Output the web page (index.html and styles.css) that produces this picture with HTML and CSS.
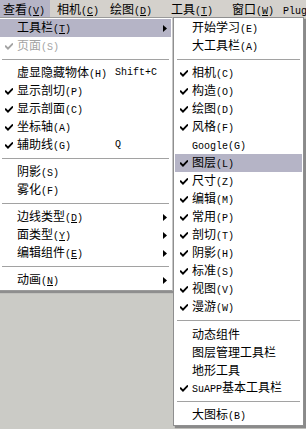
FILE: index.html
```html
<!DOCTYPE html>
<html>
<head>
<meta charset="utf-8">
<link rel="stylesheet" href="styles.css">
</head>
<body>
<div class="menubar">
  <span class="mi mi-on w1">查看<span class="k">(<u>V</u>)</span></span>
  <span class="mi w2">相机<span class="k">(<u>C</u>)</span></span>
  <span class="mi w3">绘图<span class="k">(<u>D</u>)</span></span>
  <span class="mi w4">工具<span class="k">(<u>T</u>)</span></span>
  <span class="mi w5">窗口<span class="k">(<u>W</u>)</span></span>
  <span class="mi"><span class="k">Plugins</span></span>
</div>

<div class="menu main">
  <div class="row hl"><span class="chk"></span><span class="lbl">工具栏<span class="k">(<u>T</u>)</span></span><span class="sc"></span><span class="arr"><svg width="4" height="7" viewBox="0 0 4 7"><polygon points="0,0 4,3.5 0,7"/></svg></span></div>
  <div class="row dis"><span class="chk"><svg class="ck" width="8" height="7" viewBox="0 0 8 7"><path d="M0.8 3.4 L3 5.6 L7.3 1.2"/></svg></span><span class="lbl">页面<span class="k">(S)</span></span></div>
  <div class="sep"></div>
  <div class="row"><span class="chk"></span><span class="lbl">虚显隐藏物体<span class="k">(H)</span></span><span class="sc k">Shift+C</span></div>
  <div class="row"><span class="chk"><svg class="ck" width="8" height="7" viewBox="0 0 8 7"><path d="M0.8 3.4 L3 5.6 L7.3 1.2"/></svg></span><span class="lbl">显示剖切<span class="k">(P)</span></span></div>
  <div class="row"><span class="chk"><svg class="ck" width="8" height="7" viewBox="0 0 8 7"><path d="M0.8 3.4 L3 5.6 L7.3 1.2"/></svg></span><span class="lbl">显示剖面<span class="k">(C)</span></span></div>
  <div class="row"><span class="chk"><svg class="ck" width="8" height="7" viewBox="0 0 8 7"><path d="M0.8 3.4 L3 5.6 L7.3 1.2"/></svg></span><span class="lbl">坐标轴<span class="k">(A)</span></span></div>
  <div class="row"><span class="chk"><svg class="ck" width="8" height="7" viewBox="0 0 8 7"><path d="M0.8 3.4 L3 5.6 L7.3 1.2"/></svg></span><span class="lbl">辅助线<span class="k">(G)</span></span><span class="sc k">Q</span></div>
  <div class="sep"></div>
  <div class="row"><span class="chk"></span><span class="lbl">阴影<span class="k">(S)</span></span></div>
  <div class="row"><span class="chk"></span><span class="lbl">雾化<span class="k">(F)</span></span></div>
  <div class="sep"></div>
  <div class="row"><span class="chk"></span><span class="lbl">边线类型<span class="k">(<u>D</u>)</span></span><span class="sc"></span><span class="arr"><svg width="4" height="7" viewBox="0 0 4 7"><polygon points="0,0 4,3.5 0,7"/></svg></span></div>
  <div class="row"><span class="chk"></span><span class="lbl">面类型<span class="k">(<u>Y</u>)</span></span><span class="sc"></span><span class="arr"><svg width="4" height="7" viewBox="0 0 4 7"><polygon points="0,0 4,3.5 0,7"/></svg></span></div>
  <div class="row"><span class="chk"></span><span class="lbl">编辑组件<span class="k">(<u>E</u>)</span></span><span class="sc"></span><span class="arr"><svg width="4" height="7" viewBox="0 0 4 7"><polygon points="0,0 4,3.5 0,7"/></svg></span></div>
  <div class="sep"></div>
  <div class="row"><span class="chk"></span><span class="lbl">动画<span class="k">(<u>N</u>)</span></span><span class="sc"></span><span class="arr"><svg width="4" height="7" viewBox="0 0 4 7"><polygon points="0,0 4,3.5 0,7"/></svg></span></div>
</div>

<div class="menu sub">
  <div class="row"><span class="chk"></span><span class="lbl">开始学习<span class="k">(E)</span></span></div>
  <div class="row"><span class="chk"></span><span class="lbl">大工具栏<span class="k">(A)</span></span></div>
  <div class="sep"></div>
  <div class="row"><span class="chk"><svg class="ck" width="8" height="7" viewBox="0 0 8 7"><path d="M0.8 3.4 L3 5.6 L7.3 1.2"/></svg></span><span class="lbl">相机<span class="k">(C)</span></span></div>
  <div class="row"><span class="chk"><svg class="ck" width="8" height="7" viewBox="0 0 8 7"><path d="M0.8 3.4 L3 5.6 L7.3 1.2"/></svg></span><span class="lbl">构造<span class="k">(O)</span></span></div>
  <div class="row"><span class="chk"><svg class="ck" width="8" height="7" viewBox="0 0 8 7"><path d="M0.8 3.4 L3 5.6 L7.3 1.2"/></svg></span><span class="lbl">绘图<span class="k">(D)</span></span></div>
  <div class="row"><span class="chk"><svg class="ck" width="8" height="7" viewBox="0 0 8 7"><path d="M0.8 3.4 L3 5.6 L7.3 1.2"/></svg></span><span class="lbl">风格<span class="k">(F)</span></span></div>
  <div class="row"><span class="chk"></span><span class="lbl"><span class="k">Google(G)</span></span></div>
  <div class="row hl"><span class="chk"><svg class="ck" width="8" height="7" viewBox="0 0 8 7"><path d="M0.8 3.4 L3 5.6 L7.3 1.2"/></svg></span><span class="lbl">图层<span class="k">(L)</span></span></div>
  <div class="row"><span class="chk"><svg class="ck" width="8" height="7" viewBox="0 0 8 7"><path d="M0.8 3.4 L3 5.6 L7.3 1.2"/></svg></span><span class="lbl">尺寸<span class="k">(Z)</span></span></div>
  <div class="row"><span class="chk"><svg class="ck" width="8" height="7" viewBox="0 0 8 7"><path d="M0.8 3.4 L3 5.6 L7.3 1.2"/></svg></span><span class="lbl">编辑<span class="k">(M)</span></span></div>
  <div class="row"><span class="chk"><svg class="ck" width="8" height="7" viewBox="0 0 8 7"><path d="M0.8 3.4 L3 5.6 L7.3 1.2"/></svg></span><span class="lbl">常用<span class="k">(P)</span></span></div>
  <div class="row"><span class="chk"><svg class="ck" width="8" height="7" viewBox="0 0 8 7"><path d="M0.8 3.4 L3 5.6 L7.3 1.2"/></svg></span><span class="lbl">剖切<span class="k">(T)</span></span></div>
  <div class="row"><span class="chk"><svg class="ck" width="8" height="7" viewBox="0 0 8 7"><path d="M0.8 3.4 L3 5.6 L7.3 1.2"/></svg></span><span class="lbl">阴影<span class="k">(H)</span></span></div>
  <div class="row"><span class="chk"><svg class="ck" width="8" height="7" viewBox="0 0 8 7"><path d="M0.8 3.4 L3 5.6 L7.3 1.2"/></svg></span><span class="lbl">标准<span class="k">(S)</span></span></div>
  <div class="row"><span class="chk"><svg class="ck" width="8" height="7" viewBox="0 0 8 7"><path d="M0.8 3.4 L3 5.6 L7.3 1.2"/></svg></span><span class="lbl">视图<span class="k">(V)</span></span></div>
  <div class="row"><span class="chk"><svg class="ck" width="8" height="7" viewBox="0 0 8 7"><path d="M0.8 3.4 L3 5.6 L7.3 1.2"/></svg></span><span class="lbl">漫游<span class="k">(W)</span></span></div>
  <div class="sep"></div>
  <div class="row"><span class="chk"></span><span class="lbl">动态组件</span></div>
  <div class="row"><span class="chk"></span><span class="lbl">图层管理工具栏</span></div>
  <div class="row"><span class="chk"></span><span class="lbl">地形工具</span></div>
  <div class="row"><span class="chk"><svg class="ck" width="8" height="7" viewBox="0 0 8 7"><path d="M0.8 3.4 L3 5.6 L7.3 1.2"/></svg></span><span class="lbl"><span class="k">SuAPP</span>基本工具栏</span></div>
  <div class="sep"></div>
  <div class="row"><span class="chk"></span><span class="lbl">大图标<span class="k">(B)</span></span></div>
</div>
</body>
</html>
```

FILE: styles.css
```css
html, body {
  margin: 0;
  padding: 0;
}
body {
  position: relative;
  width: 306px;
  height: 429px;
  overflow: hidden;
  background: #cbcbc6;
  font-family: "Noto Sans CJK SC", sans-serif;
  font-size: 12px;
  color: #000;
}
.k {
  font-family: "Liberation Mono", monospace;
  font-size: 10px;
}
u {
  text-decoration: underline;
  text-underline-offset: 1px;
}

/* menu bar */
.menubar {
  display: flex;
  height: 17px;
  line-height: 17px;
  background: #d4d1cc;
  white-space: nowrap;
}
.mi {
  flex: none;
  box-sizing: border-box;
  padding-left: 3px;
}
.mi-on { background: #b5b4c6; }
.w1 { width: 50px; margin-right: 4px; }
.w2 { width: 53px; }
.w3 { width: 61px; }
.w4 { width: 61px; }
.w5 { width: 51px; }

/* dropdown menus */
.menu {
  position: absolute;
  top: 17px;
  box-sizing: border-box;
  background: #fff;
  border: 1px solid #9a9a9a;
  padding: 1px;
  white-space: nowrap;
}
.main {
  left: -2px;
  width: 175px;
  border-right-color: #c8c8c8;
  box-shadow: 0 2px 1px #8e8e8e;
}
.sub {
  left: 173px;
  width: 131px;
  border-color: #8f8f8f;
  box-shadow: 2px 2px 1px #8a8a8a;
}
.row {
  display: flex;
  align-items: center;
  height: 18px;
  line-height: 18px;
}
.hl { background: #b5b4c6; }
.dis { color: #a3a3a3; }
.dis .ck path { stroke: #a3a3a3; }

.chk {
  flex: none;
  display: flex;
  align-items: center;
}
.main .chk { width: 12px; padding-left: 5px; }
.sub .chk { width: 12px; padding-left: 5px; }
.main .lbl { width: 98px; flex: none; }
.sub .lbl { flex: none; }
.sc { flex: 1; }
.arr {
  flex: none;
  width: 4px;
  margin-right: 4px;
  display: flex;
  align-items: center;
}
.arr svg { display: block; }
.ck { display: block; }
.ck path {
  fill: none;
  stroke: #000;
  stroke-width: 1.9;
  stroke-linecap: square;
}

.sep {
  height: 9px;
  display: flex;
  align-items: center;
  padding: 0 2px;
}
.sep::before {
  content: "";
  flex: 1;
  height: 1px;
  background: #a2a2a2;
}
```
